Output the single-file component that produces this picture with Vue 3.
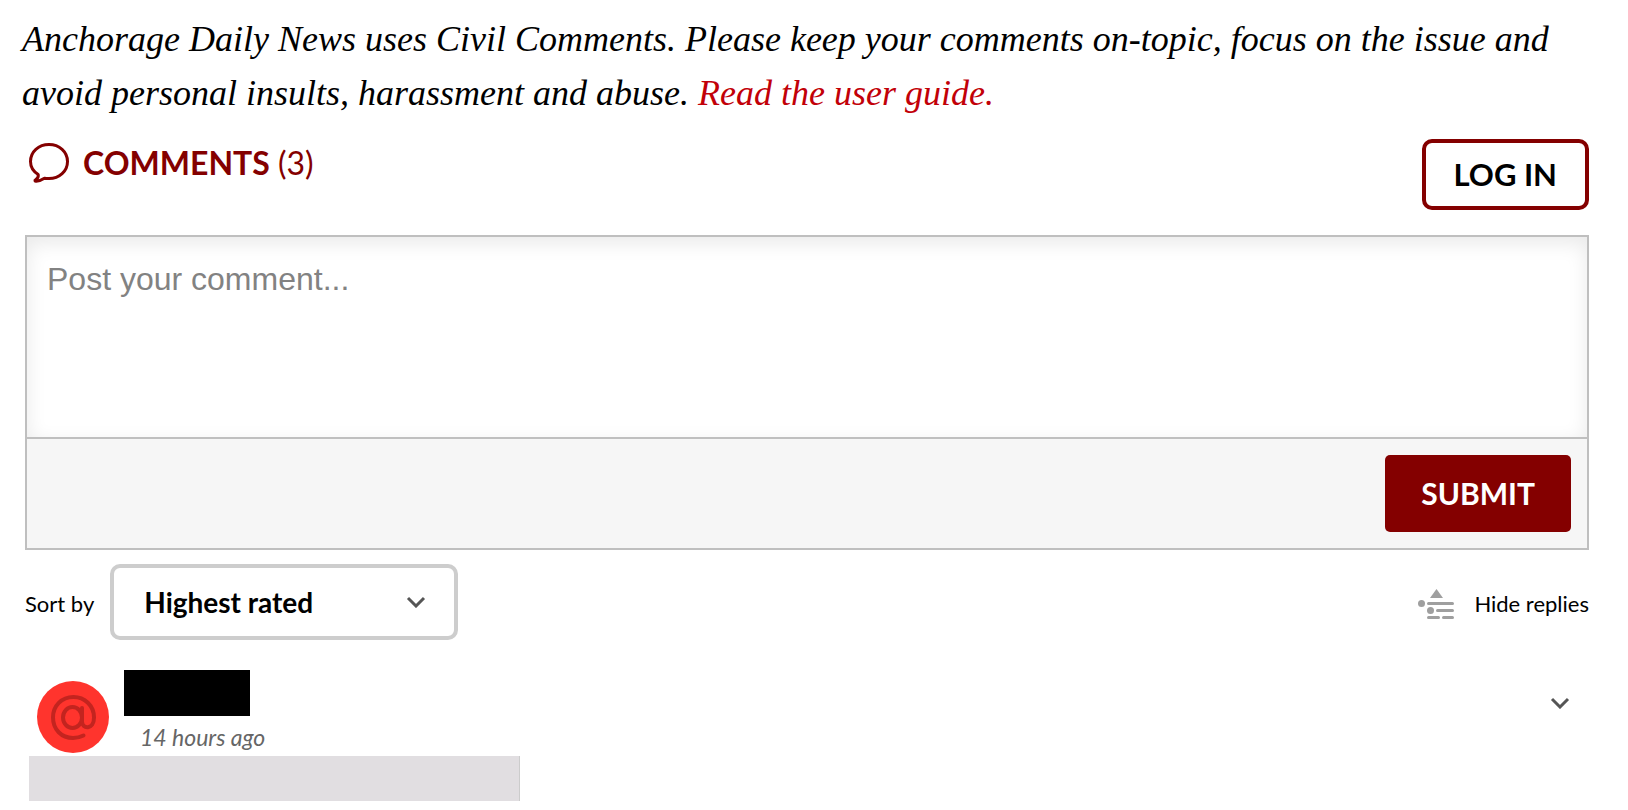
<script setup>
import { ref } from 'vue'

const comment = ref('')
const sort = ref('highest')
const count = 3
</script>

<template>
  <main class="page">
    <p class="notice">
      Anchorage Daily News uses Civil Comments. Please keep your comments on-topic, focus on the issue and avoid
      personal insults, harassment and abuse. <a href="#guide">Read the user guide.</a>
    </p>

    <header class="head">
      <h2 class="title">
        <svg class="bubble" viewBox="0 0 40 40" aria-hidden="true">
          <path d="M20 1.500C9.600 1.500 1.500 8.800 1.500 18.500C1.500 24.200 4.600 28.600 9.200 31.500C9.800 34 8.600 35.500 6.600 36.700C5.400 37.400 6 38.400 7.200 38.300C10.800 38 13.200 36.600 15.400 35.200C17 35.500 18.400 35.600 20 35.600C30.300 35.600 38.500 28.200 38.500 18.500C38.500 8.800 30.300 1.500 20 1.500Z" />
        </svg>
        <span><strong>COMMENTS</strong> ({{ count }})</span>
      </h2>
      <button class="login" type="button">LOG IN</button>
    </header>

    <form class="editor" @submit.prevent>
      <textarea v-model="comment" class="input" aria-label="Post your comment" placeholder="Post your comment..."></textarea>
      <div class="actions">
        <button class="submit" type="submit">SUBMIT</button>
      </div>
    </form>

    <div class="tools">
      <label class="small" for="sort">Sort by</label>
      <div class="select">
        <select id="sort" v-model="sort">
          <option value="highest">Highest rated</option>
        </select>
        <svg class="chevron" viewBox="0 0 20 12" aria-hidden="true"><path d="M2 2L10 10L18 2" /></svg>
      </div>
      <button class="hide small" type="button">
        <svg class="tree" viewBox="0 0 36 30" aria-hidden="true">
          <path d="M18.500 0L25 9H12Z" />
          <circle cx="3.500" cy="14.500" r="3.500" />
          <circle cx="12.500" cy="21.500" r="3.500" />
          <rect x="9" y="13" width="27" height="3" rx="1.500" />
          <rect x="18" y="20" width="18" height="3" rx="1.500" />
          <rect x="9" y="27" width="13" height="3" rx="1.500" />
          <rect x="24" y="27" width="12" height="3" rx="1.500" />
        </svg>
        Hide replies
      </button>
    </div>

    <article class="comment">
      <svg class="avatar" viewBox="0 0 72 72" aria-hidden="true">
        <circle cx="36" cy="36" r="36" fill="#ff342d" />
        <g fill="none" stroke="#c3241f" stroke-width="4" stroke-linecap="round">
          <ellipse cx="35.500" cy="36.500" rx="9.500" ry="10.500" />
          <path d="M45 27V40.500C45 48.500 57 49 57 36.500C57 24.500 47.500 16 36.500 16C24.500 16 16 25 16 36.500C16 48.500 24.500 57 36 57C40 57 43.500 56 46.500 54.500" />
        </g>
      </svg>
      <div class="meta">
        <div class="name"></div>
        <time class="time">14 hours ago</time>
      </div>
      <button class="toggle" type="button" aria-label="Collapse comment">
        <svg class="chevron" viewBox="0 0 20 12" aria-hidden="true"><path d="M2 2L10 10L18 2" /></svg>
      </button>
    </article>
    <div class="body"></div>
  </main>
</template>

<style>
body {
  background: #fff;
}
</style>

<style scoped>
.page {
  padding: 12px 39px 0 25px;
  color: #000;
  font-family: Lato, "Liberation Sans", sans-serif;
}
.page * {
  box-sizing: border-box;
}
.notice {
  margin: 0 0 19px -3px;
  font: italic 36px/54px "Liberation Serif", serif;
}
.notice a {
  color: #c20008;
  text-decoration: none;
}
.head {
  display: flex;
  align-items: flex-start;
  justify-content: space-between;
  margin-bottom: 25px;
}
.title {
  display: flex;
  align-items: center;
  gap: 14px;
  margin: 4px 0 0 4px;
  color: #840000;
  font-size: 32px;
  font-weight: 400;
  line-height: 40px;
}
.bubble {
  width: 40px;
  height: 40px;
  fill: none;
  stroke: #840000;
  stroke-width: 3;
  stroke-linejoin: round;
}
button {
  font-family: inherit;
  cursor: pointer;
}
.login {
  padding: 0 28px;
  border: 4px solid #840000;
  border-radius: 10px;
  background: #fff;
  color: #000;
  font-size: 31px;
  font-weight: 700;
  line-height: 63px;
}
.editor {
  border: 2px solid #bfbfbf;
}
.input {
  display: block;
  width: 100%;
  height: 200px;
  padding: 22px 20px;
  border: 0;
  outline: 0;
  resize: none;
  background: #fff;
  box-shadow: inset 0 6px 20px rgba(0, 0, 0, 0.09);
  font: 32px/40px "Liberation Sans", sans-serif;
}
.input::placeholder {
  color: #828282;
  opacity: 1;
}
.actions {
  display: flex;
  justify-content: flex-end;
  padding: 16px;
  border-top: 2px solid #bfbfbf;
  background: #f6f6f6;
}
.submit {
  padding: 0 36px;
  border: 0;
  border-radius: 5px;
  background: #840000;
  color: #fff;
  font-size: 30px;
  font-weight: 700;
  line-height: 77px;
}
.tools {
  display: flex;
  align-items: center;
  margin-top: 14px;
}
.small {
  padding: 4px 0 0;
  font-size: 22px;
  line-height: 28px;
}
.select {
  display: grid;
  align-items: center;
  width: 348px;
  margin-left: 16px;
}
.select > * {
  grid-area: 1 / 1;
}
.select select {
  width: 100%;
  height: 76px;
  padding: 0 30px;
  appearance: none;
  border: 4px solid #cdcdcd;
  border-radius: 10px;
  background: #fff;
  color: #000;
  font-family: inherit;
  font-size: 28px;
  font-weight: 700;
}
.chevron {
  width: 20px;
  height: 12px;
  fill: none;
  stroke: #555;
  stroke-width: 3;
}
.select .chevron {
  justify-self: end;
  margin-right: 32px;
  pointer-events: none;
}
.hide {
  display: flex;
  align-items: center;
  gap: 20px;
  margin-left: auto;
  border: 0;
  background: none;
  color: #000;
}
.tree {
  width: 36px;
  height: 30px;
  fill: #9f9f9f;
}
.comment {
  display: flex;
  align-items: flex-start;
  margin-top: 30px;
  padding-left: 12px;
}
.avatar {
  width: 72px;
  height: 72px;
  margin-top: 11px;
}
.meta {
  margin-left: 15px;
}
.name {
  width: 126px;
  height: 46px;
  background: #000;
}
.time {
  display: block;
  margin: 7px 0 0 16px;
  color: #666;
  font-size: 23px;
  font-style: italic;
  line-height: 28px;
}
.toggle {
  display: flex;
  margin: 27px 19px 0 auto;
  padding: 0;
  border: 0;
  background: none;
}
.body {
  width: 491px;
  max-width: 100%;
  height: 45px;
  margin: 3px 0 0 4px;
  border-right: 1px solid #ccc;
  background: #e1dee1;
}
</style>
